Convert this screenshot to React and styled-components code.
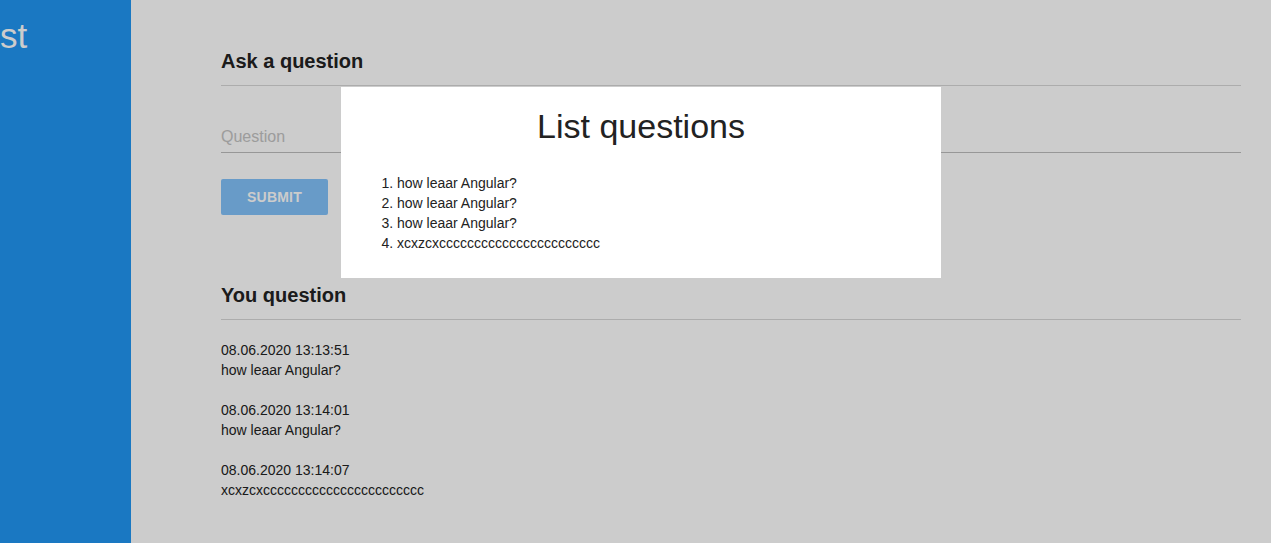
import React from "react";
import styled, { createGlobalStyle } from "styled-components";

const GlobalStyle = createGlobalStyle`
  html, body { margin: 0; padding: 0; }
  body {
    font-family: "Liberation Sans", Arial, sans-serif;
    color: #222;
    background: #fff;
  }
  * { box-sizing: border-box; }
`;

const Layout = styled.div`
  display: flex;
  min-height: 100vh;
`;

const Sidebar = styled.aside`
  width: 131px;
  flex: 0 0 131px;
  background: #2196f3;
  overflow: hidden;
`;

const Brand = styled.div`
  color: #fff;
  font-size: 35px;
  line-height: 40px;
  padding-top: 16px;
  white-space: nowrap;
`;

const Main = styled.main`
  flex: 1;
  padding: 49px 30px 40px 90px;
`;

const SectionTitle = styled.h2`
  margin: 0;
  font-size: 20px;
  line-height: 24px;
  font-weight: bold;
  padding-bottom: 12px;
  border-bottom: 1px solid #d7d7d7;
`;

const Form = styled.form`
  display: flex;
  flex-direction: column;
  align-items: flex-start;
  padding-top: 35px;
`;

const Input = styled.input`
  width: 100%;
  height: 32px;
  border: none;
  border-bottom: 1px solid #bdbdbd;
  background: transparent;
  font-family: inherit;
  font-size: 16px;
  padding: 0;
  outline: none;
  &::placeholder { color: #c4c4c4; }
`;

const SubmitButton = styled.button`
  margin-top: 26px;
  width: 107px;
  height: 36px;
  border: none;
  border-radius: 2px;
  background: #83c2fa;
  color: #fff;
  font-family: inherit;
  font-size: 14px;
  font-weight: bold;
  letter-spacing: 0.2px;
`;

const AnswersSection = styled.section`
  margin-top: 68px;
`;

const Entries = styled.div`
  padding-top: 20px;
  display: flex;
  flex-direction: column;
  gap: 20px;
`;

const Entry = styled.div`
  font-size: 14px;
  line-height: 20px;
`;

const Overlay = styled.div`
  position: fixed;
  inset: 0;
  background: rgba(0, 0, 0, 0.2);
`;

const Modal = styled.div`
  position: fixed;
  top: 87px;
  left: 341px;
  width: 600px;
  background: #fff;
  padding: 19px 16px 25px;
`;

const ModalTitle = styled.h1`
  margin: 0;
  text-align: center;
  font-size: 34px;
  line-height: 40px;
  font-weight: normal;
  color: #222;
`;

const List = styled.ol`
  margin: 27px 0 0;
  padding-left: 40px;
  font-size: 14px;
  line-height: 20px;
  color: #222;
`;

const questions = [
  { date: "08.06.2020 13:13:51", text: "how leaar Angular?" },
  { date: "08.06.2020 13:14:01", text: "how leaar Angular?" },
  { date: "08.06.2020 13:14:07", text: "xcxzcxccccccccccccccccccccccc" },
];

const listItems = [
  "how leaar Angular?",
  "how leaar Angular?",
  "how leaar Angular?",
  "xcxzcxccccccccccccccccccccccc",
];

export default function App() {
  return (
    <>
      <GlobalStyle />
      <Layout>
        <Sidebar>
          <Brand>st</Brand>
        </Sidebar>
        <Main>
          <SectionTitle>Ask a question</SectionTitle>
          <Form onSubmit={(e) => e.preventDefault()}>
            <Input placeholder="Question" />
            <SubmitButton type="submit">SUBMIT</SubmitButton>
          </Form>
          <AnswersSection>
            <SectionTitle>You question</SectionTitle>
            <Entries>
              {questions.map((q, i) => (
                <Entry key={i}>
                  <div>{q.date}</div>
                  <div>{q.text}</div>
                </Entry>
              ))}
            </Entries>
          </AnswersSection>
        </Main>
      </Layout>
      <Overlay />
      <Modal>
        <ModalTitle>List questions</ModalTitle>
        <List>
          {listItems.map((t, i) => (
            <li key={i}>{t}</li>
          ))}
        </List>
      </Modal>
    </>
  );
}
